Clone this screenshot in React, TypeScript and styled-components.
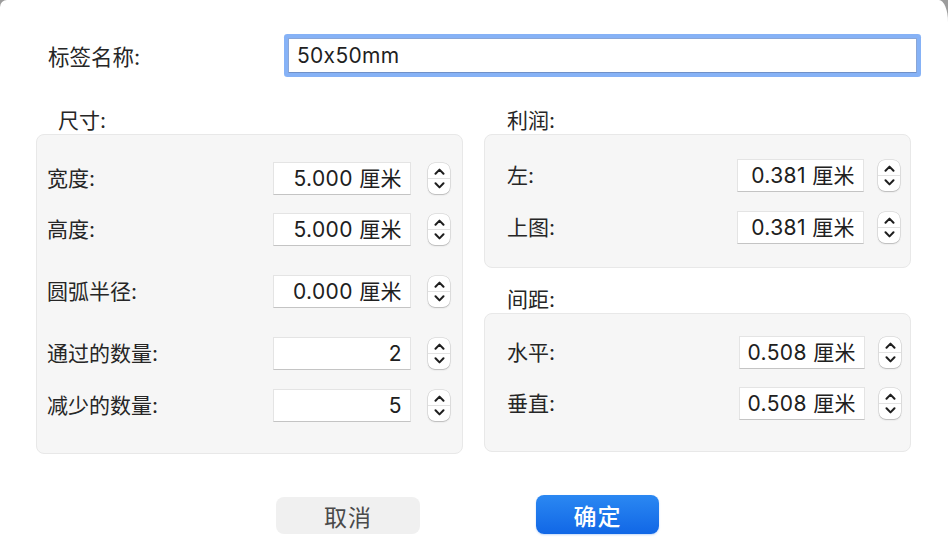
import React from "react";
import styled, { createGlobalStyle } from "styled-components";

const Global = createGlobalStyle`
  html, body { margin: 0; padding: 0; background: #9c9c9c; }
  body {
    font-family: Inter, "Noto Sans CJK SC", sans-serif;
    font-feature-settings: "calt" 0;
  }
  #root { width: 948px; height: 548px; }
`;

const Sheet = styled.div`
  width: 948px;
  height: 548px;
  box-sizing: border-box;
  background: #ffffff;
  border-top-left-radius: 7px;
  border-top-right-radius: 9px 22px;
  padding-top: 34px;
  color: #262626;
  font-size: 21px;
  display: flex;
  flex-direction: column;
`;

const NameRow = styled.div`
  display: flex;
  align-items: center;
  height: 43px;
  padding-left: 48px;
`;

const NameLabel = styled.div`
  width: 240px;
  font-size: 21.5px;
  line-height: 26px;
  margin-top: 3px;
`;

const NameInput = styled.div`
  box-sizing: border-box;
  width: 629px;
  height: 35px;
  border: 1px solid #8aa6d6;
  border-bottom-color: #6f90c8;
  border-radius: 1px;
  box-shadow: 0 0 0 4px #86b2f6;
  background: #fff;
  padding-left: 8px;
  font-size: 21px;
  line-height: 33px;
  letter-spacing: 0.3px;
  color: #1f1f1f;
`;

const Columns = styled.div`
  display: grid;
  grid-template-columns: 427px 427px;
  column-gap: 21px;
  padding-left: 36px;
  margin-top: 32px;
`;

const Column = styled.div`
  display: flex;
  flex-direction: column;
`;

const SectionTitle = styled.div<{ $indent: number; $top?: number }>`
  height: 24px;
  line-height: 24px;
  padding-left: ${(p) => p.$indent}px;
  margin-top: ${(p) => p.$top ?? 0}px;
  margin-bottom: 1px;
  font-size: 21px;
  color: #262626;
`;

const Panel = styled.div<{ $pt: number; $pb: number; $pl: number; $pr: number }>`
  box-sizing: border-box;
  background: #f6f6f6;
  border: 1px solid #e8e8e8;
  border-radius: 8px;
  padding: ${(p) => `${p.$pt}px ${p.$pr}px ${p.$pb}px ${p.$pl}px`};
  display: flex;
  flex-direction: column;
`;

const Row = styled.div<{ $mt: number }>`
  display: flex;
  align-items: center;
  height: 33px;
  margin-top: ${(p) => p.$mt}px;
`;

const Label = styled.div`
  flex: 1;
  font-size: 21px;
  line-height: 24px;
  color: #262626;
`;

const ValueBox = styled.div<{ $w: number }>`
  box-sizing: border-box;
  width: ${(p) => p.$w}px;
  height: 33px;
  background: #ffffff;
  border: 1px solid #e4e4e4;
  border-bottom: 1.5px solid #c4c4c4;
  text-align: right;
  padding-right: 8px;
  font-size: 21px;
  line-height: 31px;
  letter-spacing: 0.4px;
  color: #202020;
  white-space: nowrap;
`;

const Stepper = styled.div<{ $ml: number }>`
  box-sizing: border-box;
  width: 22px;
  height: 31px;
  margin-left: ${(p) => p.$ml}px;
  background: #ffffff;
  border-radius: 7px;
  box-shadow: 0 0 0 0.5px rgba(0, 0, 0, 0.16), 0 1px 1.5px rgba(0, 0, 0, 0.18);
  display: flex;
  flex-direction: column;
  align-items: center;
`;

const StepHalf = styled.div<{ $divider?: boolean }>`
  flex: 1;
  width: 100%;
  display: flex;
  align-items: center;
  justify-content: center;
  border-top: ${(p) => (p.$divider ? "1px solid #e2e2e2" : "none")};
`;

const Footer = styled.div`
  display: flex;
  align-items: flex-end;
  gap: 116px;
  padding-left: 276px;
  margin-top: 41px;
`;

const Button = styled.div<{ $primary?: boolean; $w: number; $h: number }>`
  box-sizing: border-box;
  width: ${(p) => p.$w}px;
  height: ${(p) => p.$h}px;
  border-radius: 8px;
  display: flex;
  align-items: center;
  justify-content: center;
  font-size: 23px;
  letter-spacing: 1px;
  font-weight: ${(p) => (p.$primary ? 500 : 400)};
  color: ${(p) => (p.$primary ? "#ffffff" : "#4a4a4a")};
  background: ${(p) =>
    p.$primary ? "linear-gradient(#2b88f2, #1167e6)" : "#f0f0f0"};
  box-shadow: ${(p) =>
    p.$primary ? "0 1px 2px rgba(17, 103, 230, 0.25)" : "none"};
`;

const Chevron = ({ up }: { up?: boolean }) => (
  <svg width="11" height="7" viewBox="0 0 11 7">
    <path
      d={up ? "M1.5 5.8 L5.5 1.6 L9.5 5.8" : "M1.5 1.2 L5.5 5.4 L9.5 1.2"}
      fill="none"
      stroke="#1e1e1e"
      strokeWidth="2"
      strokeLinecap="round"
      strokeLinejoin="round"
    />
  </svg>
);

const Spinner = ({ ml }: { ml: number }) => (
  <Stepper $ml={ml}>
    <StepHalf style={{ paddingTop: 2 }}>
      <Chevron up />
    </StepHalf>
    <StepHalf $divider style={{ paddingBottom: 2 }}>
      <Chevron />
    </StepHalf>
  </Stepper>
);

type Field = { label: string; value: string; mt: number };

const sizeFields: Field[] = [
  { label: "宽度:", value: "5.000 厘米", mt: 0 },
  { label: "高度:", value: "5.000 厘米", mt: 18 },
  { label: "圆弧半径:", value: "0.000 厘米", mt: 29 },
  { label: "通过的数量:", value: "2", mt: 29 },
  { label: "减少的数量:", value: "5", mt: 19 },
];

const marginFields: Field[] = [
  { label: "左:", value: "0.381 厘米", mt: 0 },
  { label: "上图:", value: "0.381 厘米", mt: 19 },
];

const spacingFields: Field[] = [
  { label: "水平:", value: "0.508 厘米", mt: 0 },
  { label: "垂直:", value: "0.508 厘米", mt: 18 },
];

const FieldRows = ({
  fields,
  w,
  ml,
}: {
  fields: Field[];
  w: number;
  ml: number;
}) => (
  <>
    {fields.map((f) => (
      <Row key={f.label} $mt={f.mt}>
        <Label>{f.label}</Label>
        <ValueBox $w={w}>{f.value}</ValueBox>
        <Spinner ml={ml} />
      </Row>
    ))}
  </>
);

export default function App() {
  return (
    <>
      <Global />
      <Sheet>
        <NameRow>
          <NameLabel>标签名称:</NameLabel>
          <NameInput>50x50mm</NameInput>
        </NameRow>
        <Columns>
          <Column>
            <SectionTitle $indent={22}>尺寸:</SectionTitle>
            <Panel $pt={27} $pb={31} $pl={10} $pr={12}>
              <FieldRows fields={sizeFields} w={138} ml={17} />
            </Panel>
          </Column>
          <Column>
            <SectionTitle $indent={23}>利润:</SectionTitle>
            <Panel $pt={24} $pb={23} $pl={22} $pr={10}>
              <FieldRows fields={marginFields} w={127} ml={14} />
            </Panel>
            <SectionTitle $indent={23} $top={20}>
              间距:
            </SectionTitle>
            <Panel $pt={22} $pb={31} $pl={22} $pr={9}>
              <FieldRows fields={spacingFields} w={126} ml={14} />
            </Panel>
          </Column>
        </Columns>
        <Footer>
          <Button $w={144} $h={37}>
            取消
          </Button>
          <Button $primary $w={123} $h={39}>
            确定
          </Button>
        </Footer>
      </Sheet>
    </>
  );
}
